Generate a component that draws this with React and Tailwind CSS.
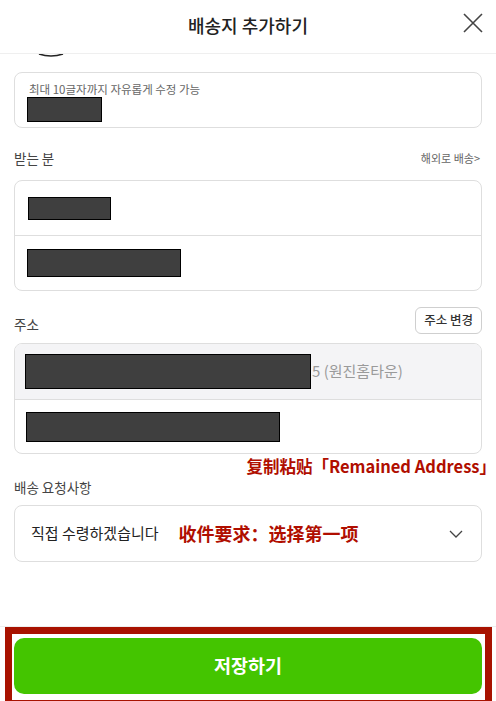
const kr = { fontFamily: '"Noto Sans CJK KR", "Noto Sans", sans-serif' };
const cn = { fontFamily: '"Noto Sans CJK SC", sans-serif' };

const Redact = ({ className }) => (
  <div className={`bg-[#3f3f3f] border border-black ${className}`} />
);

const App = () => {
  return (
    <div className="w-[496px] h-[701px] bg-white flex flex-col overflow-hidden text-[#222]" style={kr}>
      {/* header */}
      <div className="relative h-[54px] shrink-0 border-b border-[#efefef] flex items-center justify-center">
        <h1 className="text-[18px] font-medium text-[#222] leading-none -mt-[4px]">배송지 추가하기</h1>
        <svg className="absolute right-[12px] top-[12px]" width="22" height="22" viewBox="0 0 22 22">
          <path d="M2 2 L20 20 M20 2 L2 20" stroke="#444" strokeWidth="1.6" fill="none" />
        </svg>
      </div>

      <div className="px-[14px] flex flex-col">
        {/* bottom of an avatar scrolled under the header */}
        <svg className="ml-[24px] mt-[-1px]" width="26" height="5" viewBox="0 0 26 5">
          <path d="M1 1 Q13 5 25 1" stroke="#222" strokeWidth="1.6" fill="none" />
        </svg>

        <div className="mt-[14px] h-[56px] border border-[#dedede] rounded-[8px] pl-[12px] pt-[9px]">
          <div className="text-[11.5px] text-[#666] leading-[14px] pl-[2px]">최대 10글자까지 자유롭게 수정 가능</div>
          <Redact className="w-[75px] h-[25px] mt-[1px]" />
        </div>

        <div className="mt-[22px] h-[16px] flex items-center justify-between">
          <span className="text-[13.5px] text-[#444]">받는 분</span>
          <span className="text-[11px] text-[#666] mr-[2px]">해외로 배송&gt;</span>
        </div>

        <div className="mt-[14px] border border-[#dedede] rounded-[8px] overflow-hidden">
          <div className="h-[55px] border-b border-[#dedede] px-[13px] flex items-center">
            <Redact className="w-[83px] h-[23px]" />
          </div>
          <div className="h-[54px] px-[12px] flex items-center">
            <Redact className="w-[154px] h-[28px]" />
          </div>
        </div>

        <div className="mt-[16px] h-[27px] flex items-center justify-between">
          <span className="text-[13.5px] text-[#444] mt-[8px]">주소</span>
          <button className="h-[27px] px-[8px] border border-[#cfcfcf] rounded-[6px] text-[12.5px] font-medium text-[#333]">주소 변경</button>
        </div>

        <div className="mt-[9px] border border-[#dedede] rounded-[8px] overflow-hidden">
          <div className="h-[56px] bg-[#f4f4f6] border-b border-[#dedede] px-[10px] flex items-center">
            <Redact className="w-[286px] h-[35px]" />
            <span className="text-[15px] text-[#9a9a9a] ml-[1px]">5 (원진홈타운)</span>
          </div>
          <div className="h-[53px] px-[11px] flex items-center">
            <Redact className="w-[254px] h-[30px]" />
          </div>
        </div>

        <div className="flex justify-end mr-[-14px] h-[24px] items-center">
          <span className="text-[16.5px] font-bold text-[#b00e00] leading-none" style={cn}>复制粘贴「Remained Address」</span>
        </div>

        <div className="mt-[1px] text-[13.5px] text-[#444] leading-[16px]">배송 요청사항</div>

        <div className="mt-[10px] h-[57px] border border-[#dedede] rounded-[8px] pl-[16px] pr-[18px] flex items-center">
          <span className="text-[15px] text-[#222]">직접 수령하겠습니다</span>
          <span className="ml-[20px] text-[18px] font-bold text-[#b00e00]" style={cn}>收件要求：选择第一项</span>
          <svg className="ml-auto" width="14" height="8" viewBox="0 0 14 8">
            <path d="M1 1 L7 7 L13 1" stroke="#444" strokeWidth="1.3" fill="none" />
          </svg>
        </div>
      </div>

      <div className="flex-1" />

      {/* bottom bar */}
      <div className="h-[75px] shrink-0 border-t border-[#eeeeee]">
        <div className="ml-[5px] w-[487px] h-[80px] border-[7px] border-[#a81200] pt-[4px] pl-[2px] pr-[3px]">
          <button className="w-full h-[56px] rounded-[10px] bg-[#44c500] text-white text-[18.5px] font-bold">저장하기</button>
        </div>
      </div>
    </div>
  );
};

export default App;
